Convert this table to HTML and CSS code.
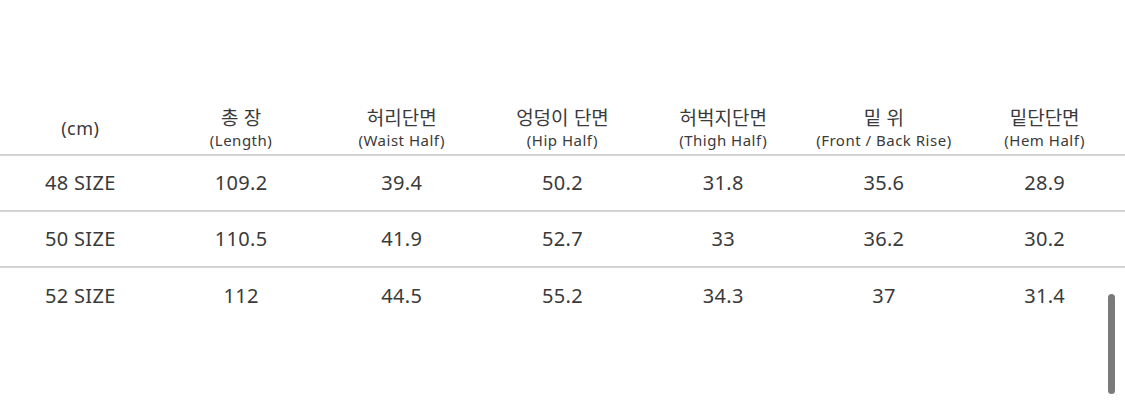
FILE: index.html
```html
<!DOCTYPE html>
<html lang="ko">
<head>
<meta charset="utf-8">
<link rel="stylesheet" href="styles.css">
</head>
<body>
<div class="page">
  <div class="table">
    <div class="row head">
      <div class="cell"><span class="unit">(cm)</span></div>
      <div class="cell"><span class="ko">총 장</span><span class="en">(Length)</span></div>
      <div class="cell"><span class="ko">허리단면</span><span class="en">(Waist Half)</span></div>
      <div class="cell"><span class="ko">엉덩이 단면</span><span class="en">(Hip Half)</span></div>
      <div class="cell"><span class="ko">허벅지단면</span><span class="en">(Thigh Half)</span></div>
      <div class="cell"><span class="ko">밑 위</span><span class="en">(Front / Back Rise)</span></div>
      <div class="cell"><span class="ko">밑단단면</span><span class="en">(Hem Half)</span></div>
    </div>
    <div class="row">
      <div class="cell">48 SIZE</div><div class="cell">109.2</div><div class="cell">39.4</div><div class="cell">50.2</div><div class="cell">31.8</div><div class="cell">35.6</div><div class="cell">28.9</div>
    </div>
    <div class="row">
      <div class="cell">50 SIZE</div><div class="cell">110.5</div><div class="cell">41.9</div><div class="cell">52.7</div><div class="cell">33</div><div class="cell">36.2</div><div class="cell">30.2</div>
    </div>
    <div class="row last">
      <div class="cell">52 SIZE</div><div class="cell">112</div><div class="cell">44.5</div><div class="cell">55.2</div><div class="cell">34.3</div><div class="cell">37</div><div class="cell">31.4</div>
    </div>
  </div>
  <div class="scrollbar"></div>
</div>
</body>
</html>
```
FILE: styles.css
```css
html, body {
  margin: 0;
  padding: 0;
  background: #ffffff;
}
body {
  font-family: "Noto Sans", "Noto Sans CJK KR", sans-serif;
  color: #3a3a3a;
}
.page {
  position: relative;
  width: 1125px;
  height: 410px;
  padding-top: 101px;
  box-sizing: border-box;
  overflow: hidden;
}
.table {
  display: flex;
  flex-direction: column;
}
.row {
  display: grid;
  grid-template-columns: repeat(7, 1fr);
  height: 56px;
  border-bottom: 2px solid #d4d4d4;
  box-sizing: border-box;
  font-size: 20px;
  letter-spacing: 0.3px;
}
.row.head {
  height: 55px;
}
.row.last {
  border-bottom: none;
}
.cell {
  display: flex;
  flex-direction: column;
  align-items: center;
  justify-content: center;
  line-height: 1;
}
.ko {
  font-family: "Noto Sans CJK KR", sans-serif;
  font-size: 19px;
  line-height: 24px;
  letter-spacing: 0;
}
.en {
  font-size: 15px;
  line-height: 22px;
  letter-spacing: 0.5px;
}
.unit {
  font-size: 18px;
  letter-spacing: 0.5px;
  padding-top: 1px;
}
.scrollbar {
  position: absolute;
  left: 1108px;
  top: 294px;
  width: 7px;
  height: 100px;
  border-radius: 4px;
  background: #7a7a7a;
}
```
